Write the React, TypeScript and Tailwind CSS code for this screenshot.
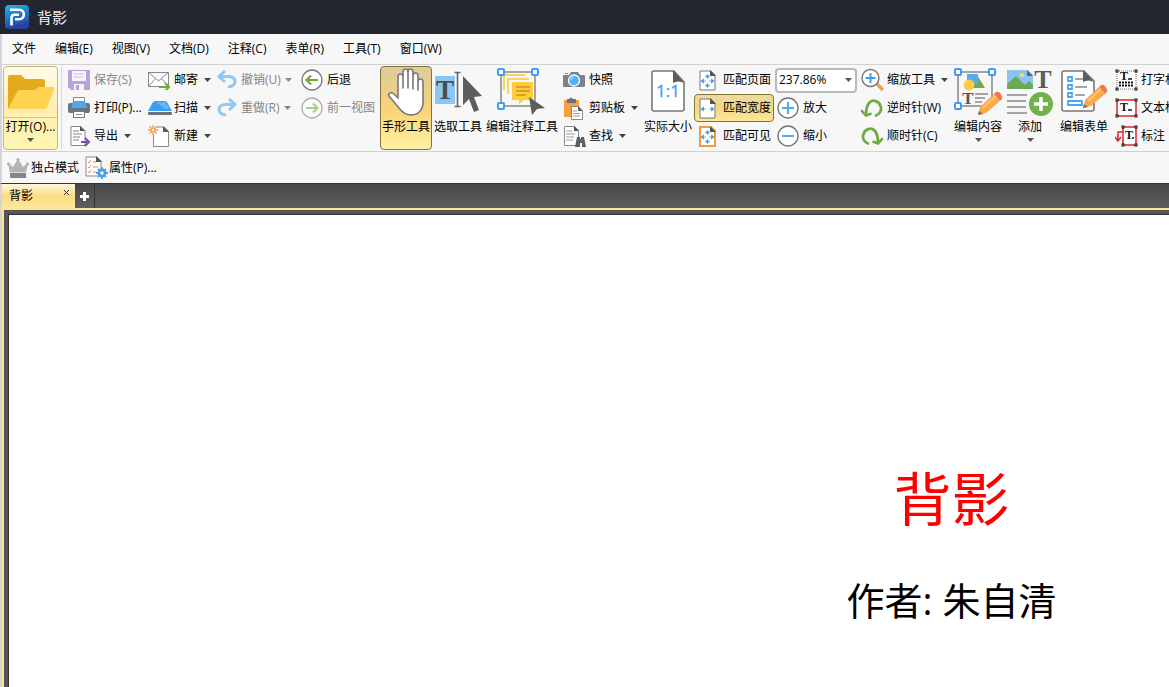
import { useState } from "react";
import type { ReactNode } from "react";

interface ToolProps {
  icon: ReactNode;
  label: string;
  menu?: boolean;
  active?: boolean;
  disabled?: boolean;
  onClick?: () => void;
}

const menus = [
  "文件",
  "编辑(E)",
  "视图(V)",
  "文档(D)",
  "注释(C)",
  "表单(R)",
  "工具(T)",
  "窗口(W)",
];

function Arrow({ className = "text-[#555]" }: { className?: string }) {
  return (
    <svg width="7" height="4" viewBox="0 0 7 4" className={`shrink-0 ${className}`} aria-hidden="true">
      <path d="M0 0h7L3.5 4z" fill="currentColor" />
    </svg>
  );
}

// Small button: icon on the left, text on the right
function Tool({ icon, label, menu, active, disabled, onClick }: ToolProps) {
  return (
    <button
      type="button"
      disabled={disabled}
      onClick={onClick}
      className={`flex h-7 items-center gap-0.5 whitespace-nowrap border ${
        active
          ? "rounded-sm border-[#857235] bg-linear-to-b from-[#ecd9a4] via-[#f9d681] to-[#fde79a]"
          : "border-transparent"
      } ${disabled ? "text-[#858585]" : "text-black"}`}
    >
      <span className="flex w-6 shrink-0 justify-start">{icon}</span>
      <span>{label}</span>
      {menu && (
        <span className="ml-1">
          <Arrow className={disabled ? "text-[#888]" : "text-[#444]"} />
        </span>
      )}
    </button>
  );
}

// Large button: icon on top, text below
function BigTool({ icon, label, menu, active, onClick }: ToolProps) {
  return (
    <button
      type="button"
      onClick={onClick}
      className={`flex h-[84px] w-[52px] shrink-0 flex-col items-center whitespace-nowrap border ${
        active
          ? "rounded-sm border-[#857235] bg-linear-to-b from-[#dccb9c] via-[#f8d376] to-[#fff0a5]"
          : "border-transparent"
      }`}
    >
      <span className="flex h-[51px] items-start pt-px">{icon}</span>
      <span className="leading-[18px]">{label}</span>
      {menu && (
        <span className="mt-0.5">
          <Arrow />
        </span>
      )}
    </button>
  );
}

function Logo() {
  return (
    <svg width="24" height="24" viewBox="0 0 24 24" aria-hidden="true">
      <defs>
        <linearGradient id="logo" x1="0" y1="0" x2="0.3" y2="1">
          <stop offset="0" stopColor="#22b7ea" />
          <stop offset="0.5" stopColor="#1a7fd0" />
          <stop offset="1" stopColor="#2b3f9c" />
        </linearGradient>
      </defs>
      <rect width="24" height="24" rx="4" fill="url(#logo)" />
      <path
        d="M5 4.800h9.200a4.700 4.700 0 0 1 0 9.400H10M6.500 20.500V13q0-3.200 3.200-3.200H14"
        fill="none"
        stroke="#fff"
        strokeWidth="2.600"
      />
    </svg>
  );
}

function FolderIcon() {
  return (
    <svg width="48" height="38" viewBox="0 0 48 38" aria-hidden="true">
      <path d="M1 36V4q0-2 2-2h11l4 4h17q3 0 3 3v7L5 36z" fill="#e3ab1b" />
      <path d="M1 36 10 19q1-2 3-2h15l4-3h14q2 0 1 3l-7 17q-1 2-3 2z" fill="#ffd350" />
    </svg>
  );
}

function SaveIcon() {
  return (
    <svg width="22" height="22" viewBox="0 0 22 22" aria-hidden="true">
      <path d="M0 1h22v20H3l-3-3z" fill="#b7a5da" />
      <path d="M4 2h14v10H4zM6 15h10v6H6z" fill="#f6f3fb" />
      <path d="M6 5h9M6 8h9" stroke="#c9c0df" />
      <path d="M8 16h3v5H8z" fill="#b7a5da" />
    </svg>
  );
}

function PrintIcon() {
  return (
    <svg width="22" height="22" viewBox="0 0 22 22" aria-hidden="true">
      <path d="M5.500 7V.500h11V7" fill="#fff" stroke="#888" />
      <rect y="6" width="22" height="10" rx="2" fill="#6c7480" />
      <path d="M5 4h12l2 7H3z" fill="#4da8ee" />
      <path d="M5.500 14.500h11v6h-11z" fill="#fff" stroke="#777" />
      <path d="M8 17.500h6" stroke="#888" />
    </svg>
  );
}

function ExportIcon() {
  return (
    <svg width="23" height="22" viewBox="0 0 23 22" aria-hidden="true">
      <path d="M3 1.500h10l4 4v15H3z" fill="#fff" stroke="#888" />
      <path d="M12 1v5h5z" fill="#555" />
      <path d="M5 6h6M5 9h9M5 12h7M5 15h6" stroke="#888" />
      <path d="M13 17h8M17 13l4 4-4 4" fill="none" stroke="#7650b5" strokeWidth="2" />
    </svg>
  );
}

function MailIcon() {
  return (
    <svg width="22" height="20" viewBox="0 0 22 20" aria-hidden="true">
      <path d="M.5 2.500h20v14H.5zM.5 2.500l10 8.500 10-8.500M.5 16.500l7-8M20.500 16.500l-7-8" fill="#fff" stroke="#888" />
      <path d="M11 17h9M17 13l4 4-4 4" fill="none" stroke="#70a83b" strokeWidth="2" />
    </svg>
  );
}

function ScanIcon() {
  return (
    <svg width="24" height="16" viewBox="0 0 24 16" aria-hidden="true">
      <path d="M5 2q1-1 3-1h8q2 0 3 1l5 9H0z" fill="#3e9df0" />
      <path d="m8 2 9 7h5l-4-6-1-1z" fill="#62b6f7" />
      <rect y="12" width="24" height="3" rx="1" fill="#68717c" />
    </svg>
  );
}

function NewIcon() {
  return (
    <svg width="23" height="22" viewBox="0 0 23 22" aria-hidden="true">
      <path d="M5.500 2h11l4 4.500v15h-15z" fill="#fff" stroke="#888" />
      <path d="M15 1v6h6z" fill="#555" />
      <circle cx="5" cy="5" r="4.500" fill="#f7f7f7" />
      <path d="M5 0v4M5 6v4M0 5h4M6 5h4M1.500 1.500l2.500 2.500M6 6l2.500 2.500M8.500 1.500 6 4M4 6 1.500 8.500" stroke="#f49b42" strokeWidth="1.300" />
    </svg>
  );
}

function UndoIcon({ redo }: { redo?: boolean }) {
  return (
    <svg width="20" height="20" viewBox="0 0 20 20" className={redo ? "-scale-x-100" : ""} aria-hidden="true">
      <path d="M2 6.500h9c5 0 7 2 7 5s-2 5-7 5.500M8 1 2 6.500 8 12" fill="none" stroke="#92c9f2" strokeWidth="3" />
    </svg>
  );
}

function CircleArrow({ forward }: { forward?: boolean }) {
  return (
    <svg width="22" height="22" viewBox="0 0 22 22" className={forward ? "-scale-x-100 opacity-55" : ""} aria-hidden="true">
      <circle cx="11" cy="11" r="10" fill="#fff" stroke="#777" strokeWidth="1.300" />
      <path d="M5.500 11H17M10 6.500 5.500 11l4.500 4.500" fill="none" stroke="#70a83b" strokeWidth="2.200" />
    </svg>
  );
}

function HandIcon() {
  return (
    <svg width="38" height="49" viewBox="0 0 38 49" aria-hidden="true">
      <path
        d="M11 30V9q0-3 2.500-3T16 9v11V4q0-3 2.500-3T21 4v16V4q0-3 2.500-3T26 4v17V8q0-3 2.500-3T31 8v14-8q0-3 2.500-3T36 14v20c0 8-5 13-12 13-6 0-9-3-12-7L2 28q-1-2 1-3 3-1 5 2z"
        fill="#fff"
        stroke="#777"
        strokeWidth="1.600"
        strokeLinejoin="round"
      />
    </svg>
  );
}

function SelectIcon() {
  return (
    <svg width="49" height="49" viewBox="0 0 49 49" aria-hidden="true">
      <path d="M1 8h20v28H1z" fill="#8bc7f5" />
      <text x="11" y="31" textAnchor="middle" fontFamily="Liberation Serif, serif" fontWeight="bold" fontSize="27" fill="#4d4d4d">
        T
      </text>
      <path d="M20.500 4.500h6M20.500 38.500h6M23.500 4v35" stroke="#666" strokeWidth="1.600" />
      <path d="m29 8 19 20-8 1 5 13-5 2-5-13-6 6z" fill="#5d5d5d" />
    </svg>
  );
}

function Handles() {
  return (
    <g fill="#fff" stroke="#3e9df0" strokeWidth="2">
      <rect x="1" y="1" width="6" height="6" rx="1" />
      <rect x="35" y="1" width="6" height="6" rx="1" />
      <rect x="1" y="35" width="6" height="6" rx="1" />
    </g>
  );
}

function CommentIcon() {
  return (
    <svg width="50" height="49" viewBox="0 0 50 49" aria-hidden="true">
      <path d="M4 4h34v34H4z" fill="#f7f7f7" stroke="#888" strokeWidth="1.500" />
      <path d="M7 22V7h21M11 26V11h21" fill="none" stroke="#f7c83d" strokeWidth="1.600" />
      <path d="M15 14h21v18H27l-5 4v-4h-7z" fill="#ffcd3c" />
      <path d="M19 19h14M19 23h14M19 27h10" stroke="#c69625" strokeWidth="1.500" />
      <Handles />
      <path d="m32 29 16 11-8 1-5 6z" fill="#5d5d5d" />
    </svg>
  );
}

function CameraIcon() {
  return (
    <svg width="22" height="18" viewBox="0 0 22 18" aria-hidden="true">
      <path d="M1 4h5l2-3h7l2 3h4q1 0 1 1v10q0 1-1 1H1q-1 0-1-1V5q0-1 1-1M2 2h3v1H2z" fill="#7c828a" />
      <circle cx="11" cy="9.500" r="5.500" fill="#56b1f4" stroke="#fff" strokeWidth="1.300" />
      <path d="M8 9q0-2.500 3-3" fill="none" stroke="#bfe2fb" />
    </svg>
  );
}

function ClipboardIcon() {
  return (
    <svg width="22" height="23" viewBox="0 0 22 23" aria-hidden="true">
      <path d="M1 3h15v17H1z" fill="#f4a040" />
      <path d="M4 2h2q2-3 4 0h3v4H4z" fill="#69717c" />
      <path d="M8.500 9.500h7l4 4v9h-11z" fill="#fff" stroke="#888" />
      <path d="M15 9v5h5z" fill="#666" />
      <path d="M10 14h4M10 16.500h7M10 19h7" stroke="#999" />
    </svg>
  );
}

function FindIcon() {
  return (
    <svg width="23" height="23" viewBox="0 0 23 23" aria-hidden="true">
      <path d="M1.500 1.500h10l4 4v15h-14z" fill="#fff" stroke="#888" />
      <path d="M11 1v5h5z" fill="#555" />
      <path d="M3 6h6M3 9h9M3 12h8M3 15h7" stroke="#999" />
      <path d="M14 12h3v2h1v-2h3l2 10h-4v-4h-2v4h-5z" fill="#59616b" />
    </svg>
  );
}

function ActualSizeIcon() {
  return (
    <svg width="34" height="45" viewBox="0 0 34 45" aria-hidden="true">
      <path d="M3 3h20l10 11v27q0 2-2 2H3q-2 0-2-2V5q0-2 2-2z" fill="#fff" stroke="#777" strokeWidth="1.600" />
      <path d="M22 2v13q5-3 11 0z" fill="#5d5d5d" />
      <text x="17" y="29" textAnchor="middle" fontFamily="Open Sans, sans-serif" fontSize="17" fill="#3f9eea" stroke="#3f9eea" strokeWidth=".3">
        1:1
      </text>
    </svg>
  );
}

function FitIcon({ kind }: { kind: "page" | "width" | "visible" }) {
  return (
    <svg width="17" height="21" viewBox="0 0 17 21" aria-hidden="true">
      <path d="M1 1h11l4 4v15H1z" fill="#fff" stroke={kind === "visible" ? "#ee9c3f" : "#777"} strokeWidth={kind === "visible" ? 2 : 1} />
      <path d="M11 0v6h6z" fill="#555" />
      <path d="M2 11l2.500-2v4zM15 11l-2.500-2v4zM4 11h3M10 11h3" fill="#499fe5" stroke="#499fe5" strokeWidth=".8" />
      {kind !== "width" && (
        <path d="M8.500 4.500 6.500 7h4zM8.500 17.500 6.500 15h4zM8.500 6v3M8.500 13v3" fill="#499fe5" stroke="#499fe5" strokeWidth=".8" />
      )}
    </svg>
  );
}

function ZoomIcon({ plus }: { plus?: boolean }) {
  return (
    <svg width="22" height="22" viewBox="0 0 22 22" aria-hidden="true">
      <circle cx="11" cy="11" r="10" fill="#fff" stroke="#777" strokeWidth="1.400" />
      <path d={plus ? "M5 11h12M11 5v12" : "M5 11h12"} stroke="#4baaf0" strokeWidth="2" />
    </svg>
  );
}

function MagnifierIcon() {
  return (
    <svg width="24" height="24" viewBox="0 0 24 24" aria-hidden="true">
      <path d="m16 16 6 6" stroke="#efa03f" strokeWidth="3.500" />
      <circle cx="9.500" cy="10" r="8.500" fill="#fff" stroke="#777" strokeWidth="1.400" />
      <path d="M4.500 10h10M9.500 5v10" stroke="#3f9eea" strokeWidth="2" />
    </svg>
  );
}

function RotateIcon({ clockwise }: { clockwise?: boolean }) {
  return (
    <svg width="22" height="20" viewBox="0 0 22 20" className={clockwise ? "-scale-x-100" : ""} aria-hidden="true">
      <path d="M14 18c5-2 7-6 5.500-10C18 3 12 1 8.500 4.500 5.500 7.500 5 11 5 17" fill="none" stroke="#70ab41" strokeWidth="2.800" />
      <path d="m0 12 5 5.500 5.500-2" fill="none" stroke="#70ab41" strokeWidth="2.600" />
    </svg>
  );
}

function Pencil() {
  return (
    <g>
      <path d="m3 14 14-13 6 7L9 20l-8 2z" fill="#f9a947" />
      <path d="m17 1 2-2q2-1 4 1l2 3q1 2-1 4l-1 1z" fill="#ef7855" />
      <path d="m2 18-1 4 5-1z" fill="#75706a" />
      <path d="m6 15 13-12" stroke="#ffc36c" strokeWidth="2" />
    </g>
  );
}

function EditContentIcon() {
  return (
    <svg width="49" height="49" viewBox="0 0 49 49" aria-hidden="true">
      <path d="M4 4h34v34H4z" fill="#f7f7f7" stroke="#888" strokeWidth="1.500" />
      <path d="m23 7 8 13H18z" fill="#69aa55" />
      <path d="M13 6h11v10H13z" fill="#55aaf0" />
      <circle cx="15" cy="17" r="5.500" fill="#ffcc42" />
      <text x="14" y="36" textAnchor="middle" fontFamily="Liberation Serif, serif" fontWeight="bold" fontSize="17" fill="#555">
        T
      </text>
      <path d="M21 26h13M21 30h10M21 34h7" stroke="#888" strokeWidth="1.500" />
      <Handles />
      <g transform="translate(23 25)">
        <Pencil />
      </g>
    </svg>
  );
}

function AddIcon() {
  return (
    <svg width="46" height="49" viewBox="0 0 46 49" className="overflow-visible" aria-hidden="true">
      <path d="M0 2h21l5 5v14H0z" fill="#8cc6ee" />
      <path d="m0 16 9-8 9 9 4-4 4 4v4H0z" fill="#69a957" />
      <path d="M20 2v6h6z" fill="#666" />
      <circle cx="15" cy="7" r="2" fill="#ffe064" />
      <text x="36" y="20" textAnchor="middle" fontFamily="Liberation Serif, serif" fontWeight="bold" fontSize="26" fill="#5d5d5d">
        T
      </text>
      <path d="M0 27h20M0 33h19M0 39h19M0 45h20" stroke="#888" strokeWidth="1.500" />
      <circle cx="34" cy="36" r="12" fill="#70b14a" />
      <path d="M27 36h14M34 29v14" stroke="#fff" strokeWidth="3.500" />
    </svg>
  );
}

function FormIcon() {
  return (
    <svg width="47" height="49" viewBox="0 0 47 49" aria-hidden="true">
      <path d="M3 3h20l10 10v28q0 2-2 2H3q-2 0-2-2V5q0-2 2-2z" fill="#fff" stroke="#777" strokeWidth="1.600" />
      <path d="M22 2v12q5-3 11 0z" fill="#5d5d5d" />
      <path d="M7 9h4v4H7zM7 17h4v4H7zM7 25h4v4H7zM7 33h14v4H7z" fill="#fff" stroke="#49a6ee" strokeWidth="1.800" />
      <path d="M14 11h8M14 19h12M14 27h10" stroke="#888" strokeWidth="1.500" />
      <g transform="translate(21 18)">
        <Pencil />
      </g>
    </svg>
  );
}

function TextIcon({ kind }: { kind: "typewriter" | "box" | "callout" }) {
  const box = kind !== "typewriter";
  const left = kind === "callout" ? 8 : 2;
  const top = kind === "box" ? 3 : 2;
  const bottom = kind === "box" ? 19 : 20;
  return (
    <svg width="24" height="22" viewBox="0 0 24 22" aria-hidden="true">
      <path
        d={`M${left} ${top}H21V${bottom}H${left}z`}
        fill="#fff"
        stroke={box ? "#d72832" : "#666"}
        strokeWidth={box ? 1.5 : 1}
        strokeDasharray={box ? undefined : "1 1"}
      />
      <text x={kind === "callout" ? 14 : 9} y={box ? 14 : 11} textAnchor="middle" fontFamily="Liberation Serif, serif" fontWeight="bold" fontSize="12" fill="#111">
        T
      </text>
      <path d={kind === "typewriter" ? "M13 10h4" : kind === "box" ? "M13 13h4" : "M17 13h2"} stroke="#111" strokeWidth="1.500" />
      {kind === "typewriter" && (
        <path d="M4 13.500h15M4 16.500h15" stroke="#111" strokeWidth="2" strokeDasharray="2 1" />
      )}
      {kind === "callout" && <path d="M8 7H3v9M0 12l3 4 3-4" fill="none" stroke="#d72832" strokeWidth="1.500" />}
      {[left, 21].map((x) =>
        [top, bottom].map((y) => (
          <rect key={`${x}-${y}`} x={x - 1} y={y - 1} width="2" height="2" fill="#fff" stroke="#111" />
        )),
      )}
    </svg>
  );
}

function CrownIcon() {
  return (
    <svg width="22" height="20" viewBox="0 0 22 20" aria-hidden="true">
      <path d="m1 5 5 4 5-8 5 8 5-4-2 10H3z" fill="#b3b3b3" />
      <path d="M3 15h16v5H3z" fill="#858585" />
      <path d="M3 14.500h16" stroke="#ddd" />
      <circle cx="1.500" cy="6" r="1.500" fill="#aaa" />
      <circle cx="11" cy="1.500" r="1.500" fill="#aaa" />
      <circle cx="20.500" cy="6" r="1.500" fill="#aaa" />
    </svg>
  );
}

function PropertiesIcon() {
  return (
    <svg width="23" height="23" viewBox="0 0 23 23" aria-hidden="true">
      <path d="M1 1h11l4 4v15H1z" fill="#fff" stroke="#888" />
      <path d="M11 0v6h6z" fill="#555" />
      <path d="m3 6 1 1 2-3M3 11l1 1 2-3M3 16l1 1 2-3M8 6h3M8 11h5M8 16h3" fill="none" stroke="#ec8062" />
      <circle cx="17" cy="17" r="4.500" fill="#4da1e6" />
      <path d="M17 11v12M11 17h12M13 13l8 8M21 13l-8 8" stroke="#4da1e6" strokeWidth="1.800" />
      <circle cx="17" cy="17" r="1.700" fill="#fff" />
    </svg>
  );
}

export default function App() {
  const [mode, setMode] = useState("hand");
  const [fit, setFit] = useState("width");
  const [zoom, setZoom] = useState("237.86%");

  return (
    <div className="flex h-screen flex-col overflow-hidden bg-[#f7f7f7] font-['Open_Sans','Noto_Sans_CJK_SC',sans-serif] text-xs text-black">
      <header className="flex h-[34px] shrink-0 items-center gap-2 bg-[#23252f] pl-[5px] text-[15px] text-[#eee]">
        <Logo />
        <h1>背影</h1>
      </header>

      <div className="shrink-0 border-l-2 border-[#d5d5d5]">
        <nav className="flex h-[31px] items-center gap-[19px] border-b border-[#d2d2d2] pl-2.5" aria-label="菜单">
          {menus.map((item) => (
            <button key={item} type="button" className="whitespace-nowrap">
              {item}
            </button>
          ))}
        </nav>

        {/* Ribbon */}
        <div className="flex h-[87px] overflow-hidden border-b border-[#d2d2d2] pt-px pl-px" role="toolbar" aria-label="主工具栏">
          <button
            type="button"
            className="flex h-[84px] w-[55px] shrink-0 flex-col items-center rounded-sm border border-[#c6b878] bg-linear-to-b from-[#fffbea] via-[#fdeeb0] to-[#fff6b0]"
          >
            <span className="flex h-[51px] w-full items-center justify-center border-b border-[#d3c487]">
              <FolderIcon />
            </span>
            <span className="leading-[18px] whitespace-nowrap">打开(O)...</span>
            <span className="mt-0.5">
              <Arrow />
            </span>
          </button>
          <div className="mr-[5px] ml-[3px] h-[84px] w-px shrink-0 bg-[#d8d8d8]" />
          <div className="w-20 shrink-0">
            <Tool icon={<SaveIcon />} label="保存(S)" disabled />
            <Tool icon={<PrintIcon />} label="打印(P)..." />
            <Tool icon={<ExportIcon />} label="导出" menu />
          </div>
          <div className="w-[69px] shrink-0">
            <Tool icon={<MailIcon />} label="邮寄" menu />
            <Tool icon={<ScanIcon />} label="扫描" menu />
            <Tool icon={<NewIcon />} label="新建" menu />
          </div>
          <div className="w-[84px] shrink-0 [&>button]:gap-0">
            <Tool icon={<UndoIcon />} label="撤销(U)" menu disabled />
            <Tool icon={<UndoIcon redo />} label="重做(R)" menu disabled />
          </div>
          <div className="w-20 shrink-0">
            <Tool icon={<CircleArrow />} label="后退" />
            <Tool icon={<CircleArrow forward />} label="前一视图" disabled />
          </div>
          <BigTool icon={<HandIcon />} label="手形工具" active={mode === "hand"} onClick={() => setMode("hand")} />
          <BigTool icon={<SelectIcon />} label="选取工具" active={mode === "select"} onClick={() => setMode("select")} />
          <div className="flex w-[76px] shrink-0 justify-center">
            <BigTool icon={<CommentIcon />} label="编辑注释工具" active={mode === "comment"} onClick={() => setMode("comment")} />
          </div>
          <div className="ml-0.5 w-20 shrink-0">
            <Tool icon={<CameraIcon />} label="快照" />
            <Tool icon={<ClipboardIcon />} label="剪贴板" menu />
            <Tool icon={<FindIcon />} label="查找" menu />
          </div>
          <BigTool icon={<ActualSizeIcon />} label="实际大小" />
          <div className="w-20 shrink-0 [&>button]:w-full [&>button]:gap-0 [&>button]:pl-1">
            <Tool icon={<FitIcon kind="page" />} label="匹配页面" active={fit === "page"} onClick={() => setFit("page")} />
            <Tool icon={<FitIcon kind="width" />} label="匹配宽度" active={fit === "width"} onClick={() => setFit("width")} />
            <Tool icon={<FitIcon kind="visible" />} label="匹配可见" active={fit === "visible"} onClick={() => setFit("visible")} />
          </div>
          <div className="w-[86px] shrink-0 pl-0.5">
            <div className="relative -ml-px flex h-7 items-center">
              <select
                aria-label="缩放比例"
                value={zoom}
                onChange={(e) => setZoom(e.target.value)}
                className="h-[25px] w-[82px] appearance-none rounded-sm border-2 border-[#b9b9b9] bg-white pl-0.5"
              >
                <option>237.86%</option>
                <option>100%</option>
                <option>200%</option>
              </select>
              <span className="pointer-events-none absolute right-2 flex">
                <Arrow />
              </span>
            </div>
            <Tool icon={<ZoomIcon plus />} label="放大" />
            <Tool icon={<ZoomIcon />} label="缩小" />
          </div>
          <div className="w-[92px] shrink-0">
            <Tool icon={<MagnifierIcon />} label="缩放工具" menu />
            <Tool icon={<RotateIcon />} label="逆时针(W)" />
            <Tool icon={<RotateIcon clockwise />} label="顺时针(C)" />
          </div>
          <BigTool icon={<EditContentIcon />} label="编辑内容" menu />
          <BigTool icon={<AddIcon />} label="添加" menu />
          <div className="mx-0.5 shrink-0">
            <BigTool icon={<FormIcon />} label="编辑表单" />
          </div>
          <div className="ml-0.5 shrink-0">
            <Tool icon={<TextIcon kind="typewriter" />} label="打字机" />
            <Tool icon={<TextIcon kind="box" />} label="文本框" />
            <Tool icon={<TextIcon kind="callout" />} label="标注" menu />
          </div>
        </div>

        <div className="flex h-[31px] items-center gap-1 pl-1 [&>button]:gap-0" role="toolbar" aria-label="文档工具栏">
          <Tool icon={<CrownIcon />} label="独占模式" />
          <Tool icon={<PropertiesIcon />} label="属性(P)..." />
        </div>
      </div>

      {/* Document tabs */}
      <div className="flex h-[27px] shrink-0 border-t border-b-2 border-l-2 border-t-[#333] border-b-[#ffe590] border-l-[#d5d5d5] bg-linear-to-b from-[#484848] to-[#5e5e5e]">
        <div className="flex w-[73px] items-start justify-between bg-linear-to-b from-[#fff6da] via-[#fddb84] to-[#ffe898] pr-[5px] pl-[7px]">
          <button type="button" className="leading-6">
            背影
          </button>
          <button type="button" aria-label="关闭" className="pt-[5px]">
            <svg width="7" height="7" viewBox="0 0 7 7">
              <path d="m1 1 5 5M6 1 1 6" stroke="#333" />
            </svg>
          </button>
        </div>
        <button type="button" aria-label="新标签" className="flex w-5 items-center justify-center border-r border-[#333]">
          <svg width="9" height="9" viewBox="0 0 9 9">
            <path d="M4.500 0v9M0 4.500h9" stroke="#fff" strokeWidth="3" />
          </svg>
        </button>
      </div>

      <main className="flex min-h-0 flex-1 overflow-hidden border-l-2 border-[#d5d5d5]">
        <div className="flex min-w-0 flex-1 overflow-hidden border-l-2 border-[#ffe590] bg-[#555] pt-1 pl-1">
          <article className="w-[1886px] shrink-0 border-t border-l border-[#333] bg-white pt-[242px] text-center">
            <h2 className="text-[58px] leading-[84px] text-[#ff0000]">背影</h2>
            <p className="mt-[31px] text-[38px] leading-[56px]">作者: 朱自清</p>
          </article>
        </div>
      </main>
    </div>
  );
}
